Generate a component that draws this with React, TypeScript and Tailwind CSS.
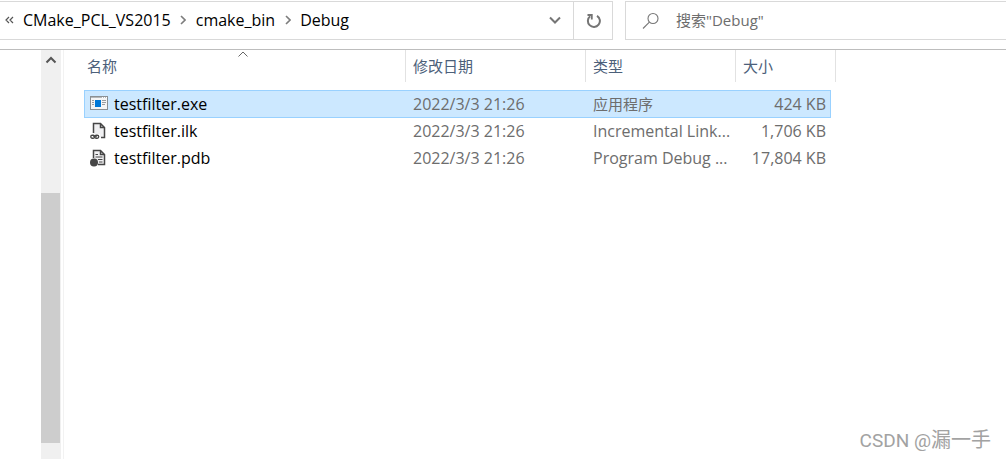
import type { ReactNode } from "react";

const files = [
  { name: "testfilter.exe", date: "2022/3/3 21:26", type: "应用程序", cjk: true, size: "424 KB", kind: "exe", selected: true },
  { name: "testfilter.ilk", date: "2022/3/3 21:26", type: "Incremental Link...", cjk: false, size: "1,706 KB", kind: "ilk", selected: false },
  { name: "testfilter.pdb", date: "2022/3/3 21:26", type: "Program Debug ...", cjk: false, size: "17,804 KB", kind: "pdb", selected: false },
];

const crumbs = ["CMake_PCL_VS2015", "cmake_bin", "Debug"];

function Chevron() {
  return (
    <svg width="6" height="10" viewBox="0 0 6 10" fill="none" stroke="#7d7d7d" strokeWidth="1.6" aria-hidden="true">
      <path d="M1 1l4 4-4 4" />
    </svg>
  );
}

function FileIcon({ kind }: { kind: string }) {
  if (kind === "exe") {
    return (
      <svg width="18" height="18" viewBox="0 0 18 18" aria-hidden="true">
        <rect x="0.5" y="1.5" width="17" height="13" fill="#f5f5f5" stroke="#8b8f92" />
        <path d="M1 2.5h16" stroke="#b4b8ba" />
        <path d="M12 2.5h1M14 2.5h1M16 2.5h1" stroke="#fff" />
        <path d="M2 5.5h2M2 7.5h2M2 9.5h2M12 5.5h4M12 7.5h4M12 9.5h3" stroke="#9a9da0" />
        <rect x="5" y="5" width="6" height="7" fill="#0078d7" />
      </svg>
    );
  }
  if (kind === "ilk") {
    return (
      <svg width="18" height="18" viewBox="0 0 18 18" fill="none" aria-hidden="true">
        <path d="M3.5 1.5h7l4 4v10h-11z" fill="#f0f0f2" />
        <path d="M3.5 11V1.5h7l4 4v10H11M10.5 2v3.5h4" stroke="#464646" strokeWidth="1.5" />
        <rect x="0" y="12" width="10" height="6" fill="#fff" />
        <rect x="0.75" y="13.25" width="4" height="3" rx="1.5" stroke="#464646" strokeWidth="1.3" />
        <rect x="4.75" y="13.25" width="4" height="3" rx="1.5" stroke="#464646" strokeWidth="1.3" />
        <path d="M3 14.75h4" stroke="#464646" />
      </svg>
    );
  }
  return (
    <svg width="18" height="18" viewBox="0 0 18 18" fill="none" aria-hidden="true">
      <path d="M3.5 1.5h7l4 4v10h-11z" fill="#f0f0f2" />
      <path d="M3.5 9V1.5h7l4 4v10H8M10.5 2v3.5h4" stroke="#464646" strokeWidth="1.5" />
      <path d="M5.5 5.5H8M5.5 8h7M8 10.5h4.5M9 13h3.5" stroke="#464646" strokeWidth="1.2" />
      <circle cx="4" cy="13.5" r="4" fill="#464646" />
    </svg>
  );
}

function HeaderCell({ children, span = 1 }: { children: ReactNode; span?: number }) {
  return (
    <th colSpan={span} scope="col" className="relative h-8 border-r border-[#e2e2e2] p-0 text-left font-normal">
      {children}
    </th>
  );
}

export default function App() {
  return (
    <div className="relative flex min-h-screen flex-col overflow-hidden bg-white font-['Open_Sans','Noto_Sans_CJK_SC',sans-serif] text-base text-black">
      <header className="flex gap-3 border-b border-[#bdbdbd] pt-px pb-[9px]">
        <nav aria-label="路径" className="flex h-[39px] w-[613px] shrink-0 border-y border-r border-[#d9d9d9]">
          <div className="flex min-w-0 flex-1 items-center pb-px pl-1">
            <button type="button" aria-label="上级位置" className="mr-2 w-[11px]">
              <svg width="11" height="8" viewBox="0 0 11 8" fill="none" stroke="#555" strokeWidth="1.2" aria-hidden="true">
                <path d="M5 1L2 4l3 3M9 1L6 4l3 3" />
              </svg>
            </button>
            {crumbs.map((crumb, i) => (
              <div key={crumb} className="flex items-center">
                {i > 0 && (
                  <span className="flex w-[25px] justify-center">
                    <Chevron />
                  </span>
                )}
                <button type="button" className="leading-6">{crumb}</button>
              </div>
            ))}
            <button type="button" aria-label="以前的位置" className="ml-auto flex w-9 items-center justify-center">
              <svg width="12" height="8" viewBox="0 0 12 8" fill="none" stroke="#757575" strokeWidth="2" aria-hidden="true">
                <path d="M1 1.5l5 5 5-5" />
              </svg>
            </button>
          </div>
          <button type="button" aria-label="刷新" className="flex w-[39px] items-center justify-center border-l border-[#d9d9d9]">
            <svg width="16" height="16" viewBox="0 0 16 16" fill="none" stroke="#757575" strokeWidth="2" aria-hidden="true">
              <path d="M12 2.8A6 6 0 1 1 5.2 3.2" />
              <path d="M2.5 2h4.3v4.5" strokeWidth="1.8" />
            </svg>
          </button>
        </nav>
        <label className="flex h-[39px] min-w-0 flex-1 items-center border-y border-l border-[#d9d9d9] pl-4">
          <svg width="18" height="18" viewBox="0 0 18 18" fill="none" stroke="#777" strokeWidth="1.1" aria-hidden="true">
            <circle cx="11" cy="6.5" r="5" />
            <path d="M7.4 10.2L1 16.5" />
          </svg>
          <input
            type="text"
            aria-label="搜索"
            placeholder={'搜索"Debug"'}
            className="ml-4 min-w-0 flex-1 bg-transparent text-[15px] outline-none placeholder:text-[#6d6d6d]"
          />
        </label>
      </header>

      <main className="flex flex-1">
        <div className="w-[41px] shrink-0" />
        <div className="flex w-5 shrink-0 flex-col bg-[#f0f0f0]">
          <div className="h-[143px]">
            <button type="button" aria-label="向上滚动" className="flex h-5 w-full items-center justify-center">
              <svg width="12" height="8" viewBox="0 0 12 8" fill="none" stroke="#555" strokeWidth="2" aria-hidden="true">
                <path d="M1.5 6.5L6 2l4.5 4.5" />
              </svg>
            </button>
          </div>
          <div className="mr-px flex-1 bg-[#cdcdcd]" />
          <div className="h-4" />
        </div>
        <div className="ml-0.5 flex-1 border-l border-[#f2f2f2] pl-5">
          <table className="w-[752px] table-fixed border-separate border-spacing-0">
            <colgroup>
              <col className="w-[322px]" />
              <col className="w-[180px]" />
              <col className="w-[150px]" />
              <col className="w-[95px]" />
              <col className="w-[5px]" />
            </colgroup>
            <thead className="text-[15px] leading-6 text-[#4c607a]">
              <tr>
                <HeaderCell>
                  <span className="pl-[3px]">名称</span>
                  <span className="absolute inset-x-0 top-px flex justify-center pr-1">
                    <svg width="10" height="6" viewBox="0 0 10 6" fill="none" stroke="#666" aria-hidden="true">
                      <path d="M0.5 5.5L5 1l4.5 4.5" />
                    </svg>
                  </span>
                </HeaderCell>
                <HeaderCell><span className="pl-[7px]">修改日期</span></HeaderCell>
                <HeaderCell><span className="pl-[7px]">类型</span></HeaderCell>
                <HeaderCell span={2}><span className="pl-[7px]">大小</span></HeaderCell>
              </tr>
              <tr aria-hidden="true">
                <td className="h-2 p-0" colSpan={5} />
              </tr>
            </thead>
            <tbody className="leading-6 text-[#6d6d6d]">
              {files.map((f) => {
                const cell = f.selected
                  ? "h-7 border-y border-[#99d1ff] bg-[#cce8ff] py-0"
                  : "h-[27px] border-transparent pt-0 pb-[2px]";
                return (
                  <tr key={f.name} aria-selected={f.selected}>
                    <td className={`${cell} border-l pl-[5px]`}>
                      <div className="flex items-center gap-[6px] text-black">
                        <FileIcon kind={f.kind} />
                        {f.name}
                      </div>
                    </td>
                    <td className={`${cell} pl-[7px]`}>{f.date}</td>
                    <td className={`${cell} pr-0 pl-[7px] whitespace-nowrap ${f.cjk ? "text-[15px]" : "text-base"}`}>{f.type}</td>
                    <td className={`${cell} border-r pr-1 text-right whitespace-nowrap`}>{f.size}</td>
                  </tr>
                );
              })}
            </tbody>
          </table>
        </div>
      </main>

      <p className="absolute right-[15px] bottom-1 font-['Roboto','Noto_Sans_CJK_SC',sans-serif] text-[19px] leading-7 text-[#a2a2a2]">
        CSDN @<span className="text-xl leading-7">漏一手</span>
      </p>
    </div>
  );
}
